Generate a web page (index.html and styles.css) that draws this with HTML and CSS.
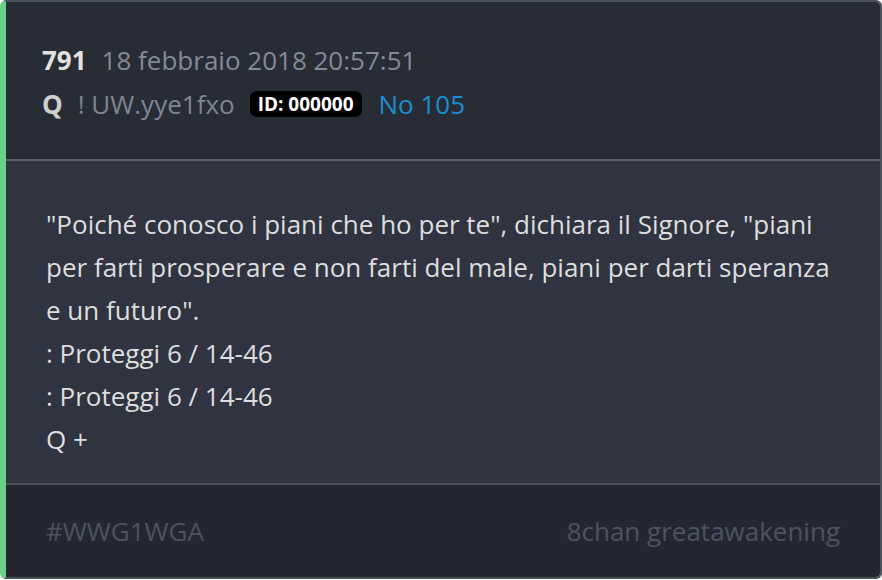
FILE: index.html
```html
<!DOCTYPE html>
<html lang="it">
<head>
    <meta charset="UTF-8">
    <title>Q Drop 791</title>
    <link rel="stylesheet" href="styles.css">
</head>
<body>
    <!-- Post card -->
    <div class="post">
        <div class="post-header">
            <div class="meta-row">
                <span class="post-num">791</span>
                <span class="post-date">18 febbraio 2018 20:57:51</span>
            </div>
            <div class="meta-row">
                <span class="author">Q</span>
                <span class="trip">! UW.yye1fxo</span>
                <span class="badge">ID: 000000</span>
                <span class="ref">No 105</span>
            </div>
        </div>

        <div class="post-body">
            <p>"Poiché conosco i piani che ho per te", dichiara il Signore, "piani per farti prosperare e non farti del male, piani per darti speranza e un futuro".</p>
            <p>: Proteggi 6 / 14-46</p>
            <p>: Proteggi 6 / 14-46</p>
            <p>Q +</p>
        </div>

        <div class="post-footer">
            <span>#WWG1WGA</span>
            <span>8chan greatawakening</span>
        </div>
    </div>
</body>
</html>
```

FILE: styles.css
```css
* {
    margin: 0;
    padding: 0;
    box-sizing: border-box;
}

body {
    font-family: 'Open Sans', sans-serif;
    background-color: #ffffff;
    width: 882px;
    height: 580px;
}

.post {
    width: 882px;
    height: 579px;
    border: 2px solid #4b515c;
    border-left: 6px solid #6ccf87;
    border-radius: 6px;
    overflow: hidden;
    display: flex;
    flex-direction: column;
}

.post-header {
    background-color: #282c35;
    height: 159px;
    padding: 36px 36px 0;
    border-bottom: 2px solid #5b616c;
}

.meta-row {
    display: flex;
    align-items: center;
    height: 44px;
}

.post-num {
    font-size: 26px;
    font-weight: 700;
    color: #e2e2e2;
    margin-right: 15px;
}

.post-date {
    font-size: 26px;
    color: #848a96;
}

.author {
    font-size: 26px;
    font-weight: 700;
    color: #cfcfcf;
    margin-right: 15px;
}

.trip {
    font-size: 26px;
    color: #7f8591;
    margin-right: 15px;
}

.badge {
    background-color: #000;
    color: #fff;
    font-size: 19px;
    font-weight: 700;
    line-height: 24px;
    padding: 1px 8px;
    border-radius: 7px;
    margin-right: 17px;
}

.ref {
    font-size: 26px;
    color: #1b8dd0;
}

.post-body {
    background-color: #2f3440;
    flex: 1;
    padding: 42px 36px 0 40px;
    border-bottom: 2px solid #4a505b;
    color: #dedede;
    font-size: 26px;
    line-height: 43px;
}

.post-footer {
    background-color: #242730;
    height: 92px;
    display: flex;
    justify-content: space-between;
    align-items: center;
    padding: 0 40px 0 40px;
    font-size: 26px;
    color: #4d5360;
}
```
